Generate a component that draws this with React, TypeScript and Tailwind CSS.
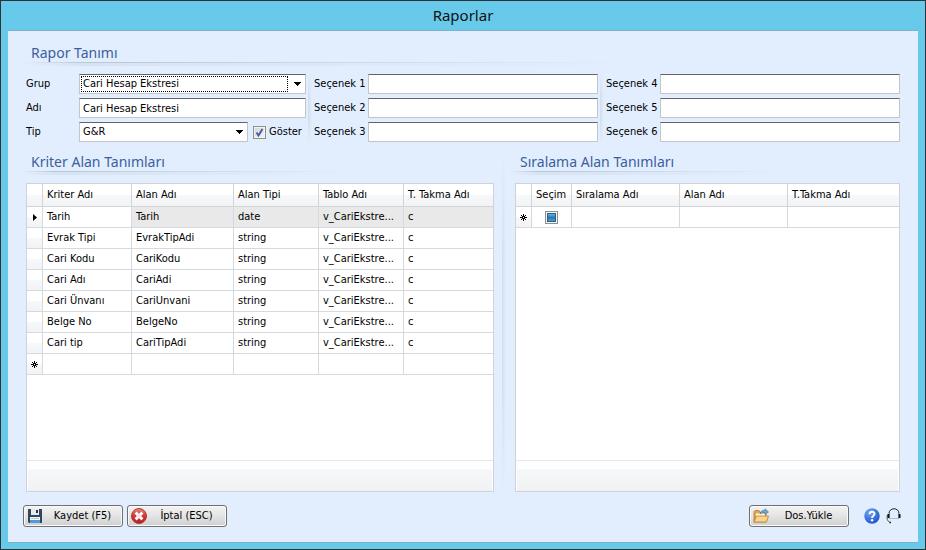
import { useState } from 'react';
import type { ReactNode } from 'react';

const CRITERIA = [
  ['Tarih', 'Tarih', 'date', 'v_CariEkstre...', 'c'],
  ['Evrak Tipi', 'EvrakTipAdi', 'string', 'v_CariEkstre...', 'c'],
  ['Cari Kodu', 'CariKodu', 'string', 'v_CariEkstre...', 'c'],
  ['Cari Adı', 'CariAdi', 'string', 'v_CariEkstre...', 'c'],
  ['Cari Ünvanı', 'CariUnvani', 'string', 'v_CariEkstre...', 'c'],
  ['Belge No', 'BelgeNo', 'string', 'v_CariEkstre...', 'c'],
  ['Cari tip', 'CariTipAdi', 'string', 'v_CariEkstre...', 'c'],
];

const FIELD = 'h-5 w-full min-w-0 border border-[#c3c5c9] border-t-[#62646c] bg-white px-[3px] text-black outline-none';
const HEAD = 'border-r border-b border-[#d3d4d7] bg-linear-to-b from-white from-50% via-[#f7f8f9] via-50% to-[#f2f3f5] px-1 text-left font-normal last:border-r-0';
const CELL = 'truncate border-r border-b border-[#d8d9dc] px-1 last:border-r-0';
const MARK = 'border-r border-b border-[#d8d9dc] bg-linear-to-b from-white from-50% via-[#f7f8f9] via-50% to-[#f2f3f5] p-0';

function SectionTitle({ children }: { children: ReactNode }) {
  return (
    <div>
      <h2 className="px-[5px] font-['Noto_Sans'] text-[14px] leading-[19px] text-[#3c5f9c]">{children}</h2>
      <div className="-ml-1 h-px w-[70%] bg-linear-to-r from-transparent via-[#b9c6d4] via-10% to-transparent" />
      <div className="-ml-1 h-[3px] w-[70%] bg-linear-to-r from-transparent via-[#d6e3f3] via-10% to-transparent" />
    </div>
  );
}

function Field({ id, label }: { id: string; label: string }) {
  return (
    <div className="flex items-center">
      <label htmlFor={id} className="w-[54px] shrink-0">{label}</label>
      <input id={id} type="text" className={FIELD} />
    </div>
  );
}

function Separator() {
  return <div className="ml-0.5 w-1 bg-linear-to-r from-[#d0dded] to-[#e2eefe] mask-y-from-70%" />;
}

function Combo({ id, options, focused }: { id: string; options: string[]; focused?: boolean }) {
  return (
    <div className="relative min-w-0 flex-1">
      <select id={id} className={`${FIELD} block appearance-none`}>
        {options.map(o => <option key={o}>{o}</option>)}
      </select>
      {focused && <span className="pointer-events-none absolute inset-y-0.5 right-[18px] left-0.5 border border-dotted border-black" />}
      <svg viewBox="0 0 7 4" className="pointer-events-none absolute top-2 right-[5px] h-1 w-[7px]" shapeRendering="crispEdges">
        <path d="M0 0h7L3.5 4z" fill="#000" />
      </svg>
    </div>
  );
}

function ToolButton({ icon, children }: { icon: ReactNode; children: ReactNode }) {
  return (
    <button
      type="button"
      className="flex h-[22px] w-[100px] items-center rounded-[3px] border border-[#707070] bg-linear-to-b from-[#f3f3f3] from-0% via-[#e4e4e4] via-50% to-[#cfcfcf] pl-[3px] whitespace-nowrap shadow-[inset_0_0_0_1px_#fafafa]"
    >
      {icon}
      <span className="flex-1 text-center">{children}</span>
    </button>
  );
}

function NewRowIcon() {
  return (
    <svg viewBox="0 0 7 7" className="mx-auto h-[7px] w-[7px]" stroke="#000" strokeWidth="1">
      <path d="M3.5 0v7M0 3.5h7M1 1l5 5M6 1L1 6" />
      <path d="M3.5 3v1" stroke="#fff" />
    </svg>
  );
}

function SaveIcon() {
  return (
    <svg viewBox="0 0 16 16" className="h-4 w-4 shrink-0">
      <path d="M1 1h14v14H2l-1-1z" fill="#33465c" />
      <path d="M4 1h8v6H4z" fill="#e6ebf1" />
      <path d="M9 2h2v3H9z" fill="#26374a" />
      <path d="M3 9h10v6H3z" fill="#f4f8fb" />
      <path d="M3 12h10v3H3z" fill="#4d9bd8" />
      <path d="M4 10.5h8" stroke="#b8c8d8" />
    </svg>
  );
}

function CancelIcon() {
  return (
    <svg viewBox="0 0 16 16" className="h-4 w-4 shrink-0">
      <defs>
        <linearGradient id="red" x1="0" y1="0" x2="0" y2="1">
          <stop offset="0" stopColor="#e98782" />
          <stop offset=".5" stopColor="#cf3733" />
          <stop offset="1" stopColor="#b81d1d" />
        </linearGradient>
      </defs>
      <circle cx="8" cy="8" r="7.5" fill="url(#red)" stroke="#b13a3a" />
      <path d="M5.7 5.7l4.600 4.600M10.300 5.700l-4.600 4.600" stroke="#fff" strokeWidth="3" strokeLinecap="square" />
      <path d="M6.500 6.500l3 3M9.500 6.500l-3 3" stroke="#f3dcdc" strokeWidth="1" />
    </svg>
  );
}

function FolderIcon() {
  return (
    <svg viewBox="0 0 16 16" className="h-4 w-4 shrink-0">
      <path d="M1 14V3.5L2 2.500h4l1 2h6V14z" fill="#e2a54e" stroke="#b97b2b" strokeWidth=".8" />
      <path d="M3 5.500h9V12H3z" fill="#fff6df" />
      <path d="M3.500 8H15.500l-2 6H1z" fill="#f9d68c" stroke="#bb7d2c" strokeWidth=".8" />
      <path d="M7 6c.5-3 2.500-4 5-3.500V.8L15.500 4 12 6.500V4.800C10 4.400 8.500 4.800 7 6z" fill="#6fa9d6" stroke="#3d6f9f" strokeWidth=".6" />
    </svg>
  );
}

function HelpIcon() {
  return (
    <svg viewBox="0 0 16 16" className="h-4 w-4">
      <defs>
        <radialGradient id="blue" cx=".35" cy=".25" r=".8">
          <stop offset="0" stopColor="#6ea4f2" />
          <stop offset="1" stopColor="#1c52cb" />
        </radialGradient>
      </defs>
      <circle cx="8" cy="8" r="7.700" fill="url(#blue)" />
      <path d="M5.600 6.200C5.600 3 10.500 3 10.500 6c0 1.800-2.400 1.900-2.400 3.900" fill="none" stroke="#fff" strokeWidth="1.900" />
      <circle cx="8.100" cy="12.200" r="1.200" fill="#fff" />
    </svg>
  );
}

function HeadsetIcon() {
  return (
    <svg viewBox="0 0 16 16" className="h-4 w-4" fill="none" stroke="#222">
      <path d="M3 5.500C3 -.8 13 -.8 13 5.500" strokeWidth="1" />
      <path d="M1.300 7C.8 11 1 13 4.500 14.500" strokeWidth=".8" />
      <path d="M4 10.500h8" stroke="#aab2bd" strokeWidth=".8" />
      <path d="M1.500 6H3v4H1.500zM13 6h1.500v4H13z" fill="#111" stroke="none" />
      <path d="M3.500 5.500v5M12.500 5.500v5" stroke="#555" strokeWidth=".9" />
      <path d="M3.500 14.500h1.500" strokeWidth="1.500" />
    </svg>
  );
}

function GridPanel({ children }: { children: ReactNode }) {
  return (
    <div className="flex flex-1 flex-col border border-[#cfd2d8] bg-white">
      <div className="flex-1">{children}</div>
      <div className="border-t border-[#e6e7e9] px-px pt-2">
        <div className="h-[22px] bg-linear-to-b from-[#f7f8f9] to-[#f0f1f3]" />
      </div>
    </div>
  );
}

export default function App() {
  const [visible, setVisible] = useState(true);

  return (
    <div className="flex min-h-screen flex-col border border-[#2f3335] bg-[#67caea] px-[7px] pb-1.5 font-['DejaVu_Sans_Condensed','DejaVu_Sans',sans-serif] text-[11px] leading-4 text-black">
      <h1 className="h-[29px] text-center font-['Noto_Sans'] text-[15px] leading-[29px] text-[#111]">Raporlar</h1>

      <main className="flex flex-1 flex-col border-y border-[#7ab0c8] bg-[#e2eefe] px-[18px] pb-[15px]">
        <div className="pt-3">
          <SectionTitle>Rapor Tanımı</SectionTitle>
        </div>

        {/* Report definition */}
        <form className="mt-2 grid grid-cols-[280fr_8px_284fr_8px_294fr]">
          <div className="flex flex-col gap-1">
            <div className="flex items-center">
              <label htmlFor="grup" className="w-[53px] shrink-0">Grup</label>
              <Combo id="grup" options={['Cari Hesap Ekstresi']} focused />
            </div>
            <div className="flex items-center">
              <label htmlFor="adi" className="w-[53px] shrink-0">Adı</label>
              <input id="adi" type="text" defaultValue="Cari Hesap Ekstresi" className={FIELD} />
            </div>
            <div className="flex items-center">
              <label htmlFor="tip" className="w-[53px] shrink-0">Tip</label>
              <Combo id="tip" options={['G&R']} />
              <label className="flex w-[58px] shrink-0 items-center gap-[3px] pl-[5px]">
                <span className="relative h-[13px] w-[13px] shrink-0">
                  <input
                    type="checkbox"
                    checked={visible}
                    onChange={e => setVisible(e.target.checked)}
                    className="block h-[13px] w-[13px] appearance-none border border-[#8e8f8f] bg-linear-to-br from-[#cfd3d9] to-[#f6f6f6] shadow-[inset_0_0_0_1px_#f4f4f4]"
                  />
                  {visible && (
                    <svg viewBox="0 0 13 13" className="pointer-events-none absolute inset-0" fill="none" stroke="#4a5f97" strokeWidth="2">
                      <path d="M3.500 6.500l2 3L9.500 3" />
                    </svg>
                  )}
                </span>
                Göster
              </label>
            </div>
          </div>
          <Separator />
          <div className="flex flex-col gap-1">
            <Field id="s1" label="Seçenek 1" />
            <Field id="s2" label="Seçenek 2" />
            <Field id="s3" label="Seçenek 3" />
          </div>
          <Separator />
          <div className="flex flex-col gap-1">
            <Field id="s4" label="Seçenek 4" />
            <Field id="s5" label="Seçenek 5" />
            <Field id="s6" label="Seçenek 6" />
          </div>
        </form>

        {/* Criteria and sorting grids */}
        <div className="mt-[10px] flex flex-1">
          <section className="flex flex-[468] flex-col gap-2">
            <SectionTitle>Kriter Alan Tanımları</SectionTitle>
            <GridPanel>
              <table className="w-full table-fixed border-separate border-spacing-0">
                <colgroup>
                  <col className="w-4" />
                  <col className="w-[89px]" />
                  <col className="w-[102px]" />
                  <col className="w-[85px]" />
                  <col className="w-[85px]" />
                  <col />
                </colgroup>
                <thead>
                  <tr className="h-[23px]">
                    <th className={HEAD} />
                    <th className={HEAD}>Kriter Adı</th>
                    <th className={HEAD}>Alan Adı</th>
                    <th className={HEAD}>Alan Tipi</th>
                    <th className={HEAD}>Tablo Adı</th>
                    <th className={HEAD}>T. Takma Adı</th>
                  </tr>
                </thead>
                <tbody>
                  {CRITERIA.map((row, i) => (
                    <tr key={row[0]} className="h-[21px]">
                      <td className={MARK}>
                        {i === 0 && (
                          <svg viewBox="0 0 4 7" className="mx-auto h-[7px] w-1">
                            <path d="M0 0l4 3.500L0 7z" />
                          </svg>
                        )}
                      </td>
                      {row.map((value, j) => (
                        <td key={j} className={i === 0 && j > 0 ? `${CELL} bg-[#e9e9e9]` : CELL}>{value}</td>
                      ))}
                    </tr>
                  ))}
                  <tr className="h-[21px]">
                    <td className={MARK}><NewRowIcon /></td>
                    <td className={CELL} />
                    <td className={CELL} />
                    <td className={CELL} />
                    <td className={CELL} />
                    <td className={CELL} />
                  </tr>
                </tbody>
              </table>
            </GridPanel>
          </section>

          <div className="flex w-[21px] pl-1.5">
            <Separator />
          </div>

          <section className="flex flex-[385] flex-col gap-2">
            <SectionTitle>Sıralama Alan Tanımları</SectionTitle>
            <GridPanel>
              <table className="w-full table-fixed border-separate border-spacing-0">
                <colgroup>
                  <col className="w-4" />
                  <col className="w-10" />
                  <col className="w-[108px]" />
                  <col className="w-[108px]" />
                  <col />
                </colgroup>
                <thead>
                  <tr className="h-[23px]">
                    <th className={HEAD} />
                    <th className={HEAD}>Seçim</th>
                    <th className={HEAD}>Sıralama Adı</th>
                    <th className={HEAD}>Alan Adı</th>
                    <th className={HEAD}>T.Takma Adı</th>
                  </tr>
                </thead>
                <tbody>
                  <tr className="h-[21px]">
                    <td className={MARK}><NewRowIcon /></td>
                    <td className={CELL}>
                      <input
                        type="checkbox"
                        aria-label="Seçim"
                        className="mx-auto block h-[13px] w-[13px] appearance-none border border-[#8e8f8f] bg-linear-to-b from-[#8fd0ee] from-0% via-[#2478ae] via-50% to-[#5cb8e4] shadow-[inset_0_0_0_1px_#f4f4f4,inset_0_0_0_2px_#2b6187]"
                      />
                    </td>
                    <td className={CELL} />
                    <td className={CELL} />
                    <td className={CELL} />
                  </tr>
                </tbody>
              </table>
            </GridPanel>
          </section>
        </div>

        {/* Actions */}
        <footer className="mt-[13px] -mr-0.5 -ml-[3px] flex items-center gap-1">
          <ToolButton icon={<SaveIcon />}>Kaydet (F5)</ToolButton>
          <ToolButton icon={<CancelIcon />}>İptal (ESC)</ToolButton>
          <div className="ml-auto flex items-center">
            <ToolButton icon={<FolderIcon />}>Dos.Yükle</ToolButton>
            <button type="button" aria-label="Yardım" className="ml-[15px]"><HelpIcon /></button>
            <button type="button" aria-label="Destek" className="ml-1.5"><HeadsetIcon /></button>
          </div>
        </footer>
      </main>
    </div>
  );
}
